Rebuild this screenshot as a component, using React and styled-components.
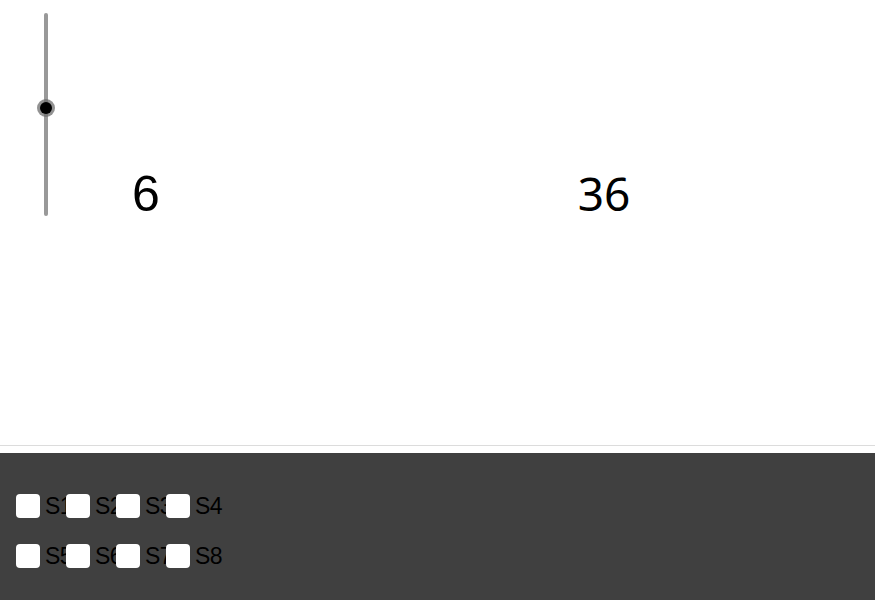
import React from 'react';
import styled, { createGlobalStyle } from 'styled-components';

const GlobalStyle = createGlobalStyle`
  html, body {
    margin: 0;
    padding: 0;
    background: #ffffff;
  }
  body {
    font-family: "Liberation Sans", Arial, sans-serif;
    overflow: hidden;
  }
`

const Page = styled.div`
  width: 875px;
  height: 600px;
  display: flex;
  flex-direction: column;
`

const Canvas = styled.div`
  height: 446px;
  flex-shrink: 0;
  box-sizing: border-box;
  border-bottom: 1px solid #dcdcdc;
  display: flex;
  align-items: flex-start;
  padding: 13px 0 0 44px;
`

const SliderTrack = styled.div`
  position: relative;
  width: 4px;
  height: 203px;
  border-radius: 2px;
  background: #999999;
  flex-shrink: 0;
`

const SliderKnob = styled.div`
  position: absolute;
  left: 50%;
  top: ${props => props.$pos}px;
  width: 12px;
  height: 12px;
  margin: -6px 0 0 -6px;
  border-radius: 50%;
  background: #000;
  box-shadow: 0 0 0 3px rgba(110, 110, 110, 0.75);
`

const Value = styled.div`
  font-family: ${props => props.$font};
  font-size: ${props => props.$size}px;
  line-height: 1;
  color: #000;
  margin-top: ${props => props.$top}px;
  margin-left: ${props => props.$left}px;
`

const Panel = styled.div`
  margin-top: 7px;
  flex: 1;
  background: #404040;
  padding: 41px 0 0 16px;
  display: flex;
  flex-direction: column;
  gap: 26px;
`

const CheckRow = styled.div`
  display: flex;
  height: 24px;
`

const CheckItem = styled.label`
  width: 50px;
  flex-shrink: 0;
  display: flex;
  align-items: center;
  gap: 5px;
  white-space: nowrap;
  overflow: visible;
`

const Box = styled.span`
  width: 24px;
  height: 24px;
  border-radius: 4px;
  background: #ffffff;
  flex-shrink: 0;
`

const Label = styled.span`
  font-family: "Liberation Sans", Arial, sans-serif;
  font-size: 23px;
  color: #000;
  letter-spacing: -0.5px;
`

const rows = [
  ['S1', 'S2', 'S3', 'S4'],
  ['S5', 'S6', 'S7', 'S8'],
]

export default function App() {
  return (
    <Page>
      <GlobalStyle />
      <Canvas>
        <SliderTrack>
          <SliderKnob $pos={95} />
        </SliderTrack>
        <Value $font={'"Liberation Sans", Arial, sans-serif'} $size={50} $top={156} $left={84}>6</Value>
        <Value $font={'"Noto Sans", "Open Sans", sans-serif'} $size={46} $top={157} $left={418}>36</Value>
      </Canvas>
      <Panel>
        {rows.map((row, i) => (
          <CheckRow key={i}>
            {row.map(name => (
              <CheckItem key={name}>
                <Box />
                <Label>{name}</Label>
              </CheckItem>
            ))}
          </CheckRow>
        ))}
      </Panel>
    </Page>
  );
}
